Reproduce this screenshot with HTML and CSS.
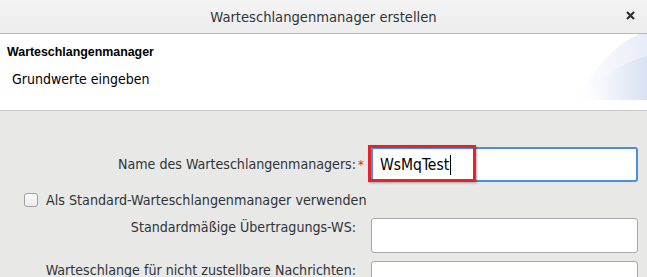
FILE: index.html
```html
<!DOCTYPE html>
<html lang="de">
<head>
<meta charset="utf-8">
<title>Warteschlangenmanager erstellen</title>
<link rel="stylesheet" href="styles.css">
</head>
<body>
<div class="dialog">
  <div class="titlebar">
    <span class="title">Warteschlangenmanager erstellen</span>
    <svg class="close" width="9" height="9" viewBox="0 0 9 9">
      <path d="M1 1 L8 8 M8 1 L1 8" stroke="#2e3436" stroke-width="2.2" stroke-linecap="butt"/>
    </svg>
  </div>
  <div class="banner">
    <div class="banner-text">
      <div class="banner-title">Warteschlangenmanager</div>
      <div class="banner-sub">Grundwerte eingeben</div>
    </div>
    <svg class="banner-art" width="70" height="66" viewBox="0 0 70 66">
      <defs>
        <linearGradient id="g1" x1="0" y1="0" x2="1" y2="0">
          <stop offset="0" stop-color="#ffffff"/>
          <stop offset="1" stop-color="#e8ecf8"/>
        </linearGradient>
        <linearGradient id="g2" x1="0" y1="0" x2="1" y2="0">
          <stop offset="0" stop-color="#ffffff"/>
          <stop offset="1" stop-color="#dae1f3"/>
        </linearGradient>
      </defs>
      <path d="M0 66 C 14 40, 34 12, 62 0 L70 0 L70 66 Z" fill="url(#g1)"/>
      <path d="M9 66 C 20 48, 40 30, 70 22 L70 66 Z" fill="url(#g2)"/>
    </svg>
  </div>
  <div class="content">
    <div class="row row-name">
      <label class="label">Name des Warteschlangenmanagers:</label>
      <span class="req">*</span>
      <div class="field focused">
        <span class="value">WsMqTest</span><span class="caret"></span>
        <span class="highlight"></span>
      </div>
    </div>
    <div class="check-row">
      <span class="checkbox"></span>
      <span class="check-label">Als Standard-Warteschlangenmanager verwenden</span>
    </div>
    <div class="row row-top">
      <label class="label">Standardmäßige Übertragungs-WS:</label>
      <span class="req"></span>
      <div class="field"></div>
    </div>
    <div class="row row-top">
      <label class="label">Warteschlange für nicht zustellbare Nachrichten:</label>
      <span class="req"></span>
      <div class="field"></div>
    </div>
  </div>
</div>
</body>
</html>
```
FILE: styles.css
```css
html, body {
  margin: 0;
  padding: 0;
  background: #e8e8e7;
  overflow: hidden;
}
.dialog {
  width: 647px;
  height: 277px;
  overflow: hidden;
  font-family: "DejaVu Sans Condensed", "DejaVu Sans", sans-serif;
  color: #2e3436;
}
.titlebar {
  height: 33px;
  background: linear-gradient(#f4f4f4, #ededed);
  border-bottom: 1px solid #b9b9b9;
  display: flex;
  align-items: center;
  justify-content: center;
  position: relative;
}
.title {
  font-size: 14.6px;
  color: #2e3436;
}
.close {
  position: absolute;
  right: 12px;
  top: 11px;
}
.banner {
  height: 76px;
  background: #ffffff;
  border-bottom: 1px solid #c9c9c8;
  display: flex;
  justify-content: space-between;
  align-items: flex-end;
}
.banner-text {
  padding: 10px 0 0 7px;
  align-self: flex-start;
}
.banner-title {
  font-family: "Liberation Sans", Arial, sans-serif;
  font-weight: bold;
  font-size: 12.4px;
  color: #000;
  height: 17px;
  line-height: 17px;
}
.banner-sub {
  font-size: 14px;
  color: #000;
  padding: 10px 0 0 5px;
}
.banner-art {
  display: block;
  margin-bottom: 10px;
}
.content {
  padding-top: 36px;
}
.row {
  display: flex;
  align-items: center;
  height: 35px;
  margin-bottom: 8px;
}
.row-name {
  margin-bottom: 0;
}
.row-top {
  align-items: flex-start;
}
.label {
  width: 356px;
  text-align: right;
  font-size: 14.1px;
  line-height: 17px;
  color: #2e3436;
}
.row-top .label {
  padding-top: 1px;
}
.req {
  width: 15px;
  color: #e01b1b;
  font-size: 13px;
  padding-left: 2px;
  box-sizing: border-box;
}
.field {
  width: 267px;
  height: 35px;
  box-sizing: border-box;
  background: #fff;
  border: 1px solid #a9a9a9;
  border-radius: 3px;
  display: flex;
  align-items: center;
  position: relative;
}
.field.focused {
  border: 2px solid #4a90d9;
  padding-left: 7px;
}
.value {
  font-size: 15.5px;
  color: #000;
}
.caret {
  width: 1px;
  height: 20px;
  background: #000;
  margin-left: 1px;
}
.highlight {
  position: absolute;
  left: -5px;
  top: -4px;
  width: 108px;
  height: 37px;
  border: 3px solid #e3242b;
  box-sizing: border-box;
  box-shadow: 1px 1px 2px rgba(0,0,0,0.3);
}
.check-row {
  display: flex;
  align-items: center;
  height: 36px;
  padding-left: 24px;
}
.checkbox {
  width: 14px;
  height: 14px;
  box-sizing: border-box;
  border: 1px solid #a0a0a0;
  border-radius: 3px;
  background: linear-gradient(#fbfbfb, #ececec);
}
.check-label {
  font-size: 14.2px;
  margin-left: 8px;
  color: #2e3436;
}
```
